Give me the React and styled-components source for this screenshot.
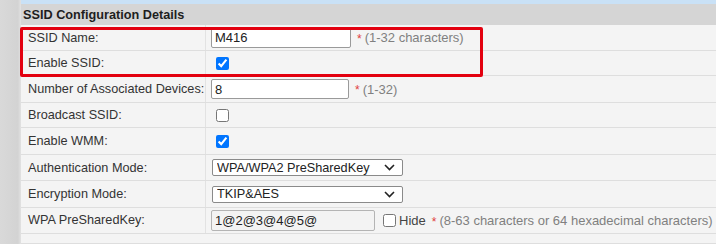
import React from "react";
import styled, { createGlobalStyle } from "styled-components";

const GlobalStyle = createGlobalStyle`
  html, body {
    margin: 0;
    padding: 0;
    background: #d6d6d6;
    font-family: "Liberation Sans", Arial, sans-serif;
  }
`;

const Page = styled.div`
  display: flex;
  width: 716px;
  height: 244px;
  overflow: hidden;
`;

const SideStrip = styled.div`
  width: 21px;
  flex: none;
  background: linear-gradient(to right, #d9d9d9 0%, #d3d3d3 85%, #e2e2e2 100%);
`;

const Main = styled.div`
  flex: 1;
  display: flex;
  flex-direction: column;
  position: relative;
`;

const TopBand = styled.div`
  height: 4px;
  background: #c9e1f6;
`;

const Header = styled.div`
  height: 22px;
  display: flex;
  align-items: center;
  padding-left: 2px;
  background: #d5d5d5;
  font-size: 12.7px;
  font-weight: bold;
  color: #1e1e1e;
`;

const Row = styled.div`
  display: grid;
  grid-template-columns: 185px 1fr;
  height: ${(p) => p.$h}px;
  box-sizing: border-box;
  border-bottom: 1px solid #dedede;
  background: #f4f4f4;
`;

const Label = styled.div`
  display: flex;
  align-items: center;
  padding-left: 7px;
  border-right: 1px solid #e2e2e2;
  font-size: 12.7px;
  color: #333;
  white-space: nowrap;
`;

const Value = styled.div`
  display: flex;
  align-items: center;
  gap: 5px;
  padding-left: 5px;
  font-size: 13px;
  color: #888;
  white-space: nowrap;
`;

const TextInput = styled.input`
  box-sizing: border-box;
  width: ${(p) => p.$w}px;
  height: ${(p) => p.$ht || 20}px;
  margin: 0;
  padding: 1px 3px;
  border: 1px solid ${(p) => (p.$muted ? "#b4b4b4" : "#9a9a9a")};
  border-radius: 2px;
  background: ${(p) => (p.$muted ? "#f3f3f3" : "#fff")};
  font-family: inherit;
  font-size: 13px;
  color: #222;
  outline: none;
`;

const SelectWrap = styled.div`
  position: relative;
  margin-left: 1px;
  width: 191px;
  height: 17px;
`;

const Select = styled.select`
  appearance: none;
  box-sizing: border-box;
  width: 100%;
  height: 100%;
  margin: 0;
  padding: 0 0 0 4px;
  border: 1px solid #8a8a8a;
  border-radius: 2px;
  background: #fff;
  font-family: inherit;
  font-size: 12.7px;
  color: #222;
  outline: none;
`;

const Chevron = styled.svg`
  position: absolute;
  right: 8px;
  top: 5px;
  pointer-events: none;
`;

const Check = styled.input.attrs({ type: "checkbox" })`
  width: 13px;
  height: 13px;
  margin: 0 0 0 ${(p) => (p.$inline ? 3 : 5)}px;
  accent-color: #0075ff;
`;

const Star = styled.span`
  color: #e04040;
  font-size: 12px;
  margin-left: 1px;
  margin-right: -2px;
  align-self: flex-start;
  margin-top: 7px;
`;

const Hint = styled.span`
  color: #808080;
`;

const HideLabel = styled.span`
  color: #444;
  margin-left: -2px;
`;

const Highlight = styled.div`
  position: absolute;
  left: -1px;
  top: 27px;
  width: 463px;
  height: 50px;
  box-sizing: border-box;
  border: 3px solid #e3000f;
  border-radius: 2px;
  pointer-events: none;
`;

const Dropdown = ({ value }) => (
  <SelectWrap>
    <Select defaultValue={value}>
      <option>{value}</option>
    </Select>
    <Chevron width="11" height="7" viewBox="0 0 11 7">
      <path d="M1 1l4.5 4.5L10 1" fill="none" stroke="#222" strokeWidth="1.6" />
    </Chevron>
  </SelectWrap>
);

export default function App() {
  return (
    <>
      <GlobalStyle />
      <Page>
        <SideStrip />
        <Main>
          <TopBand />
          <Header>SSID Configuration Details</Header>
          <Row $h={26}>
            <Label>SSID Name:</Label>
            <Value>
              <TextInput $w={140} defaultValue="M416" />
              <Star>*</Star>
              <Hint>(1-32 characters)</Hint>
            </Value>
          </Row>
          <Row $h={26}>
            <Label>Enable SSID:</Label>
            <Value>
              <Check defaultChecked />
            </Value>
          </Row>
          <Row $h={27}>
            <Label>Number of Associated Devices:</Label>
            <Value>
              <TextInput $w={138} defaultValue="8" />
              <Star>*</Star>
              <Hint>(1-32)</Hint>
            </Value>
          </Row>
          <Row $h={26}>
            <Label>Broadcast SSID:</Label>
            <Value>
              <Check />
            </Value>
          </Row>
          <Row $h={27}>
            <Label>Enable WMM:</Label>
            <Value>
              <Check defaultChecked />
            </Value>
          </Row>
          <Row $h={27}>
            <Label>Authentication Mode:</Label>
            <Value>
              <Dropdown value="WPA/WPA2 PreSharedKey" />
            </Value>
          </Row>
          <Row $h={27}>
            <Label>Encryption Mode:</Label>
            <Value>
              <Dropdown value="TKIP&AES" />
            </Value>
          </Row>
          <Row $h={27}>
            <Label>WPA PreSharedKey:</Label>
            <Value>
              <TextInput $w={164} $ht={21} $muted defaultValue="1@2@3@4@5@" />
              <Check $inline />
              <HideLabel>Hide</HideLabel>
              <Star>*</Star>
              <Hint>(8-63 characters or 64 hexadecimal characters)</Hint>
            </Value>
          </Row>
          <Row $h={10} />
          <Highlight />
        </Main>
      </Page>
    </>
  );
}
